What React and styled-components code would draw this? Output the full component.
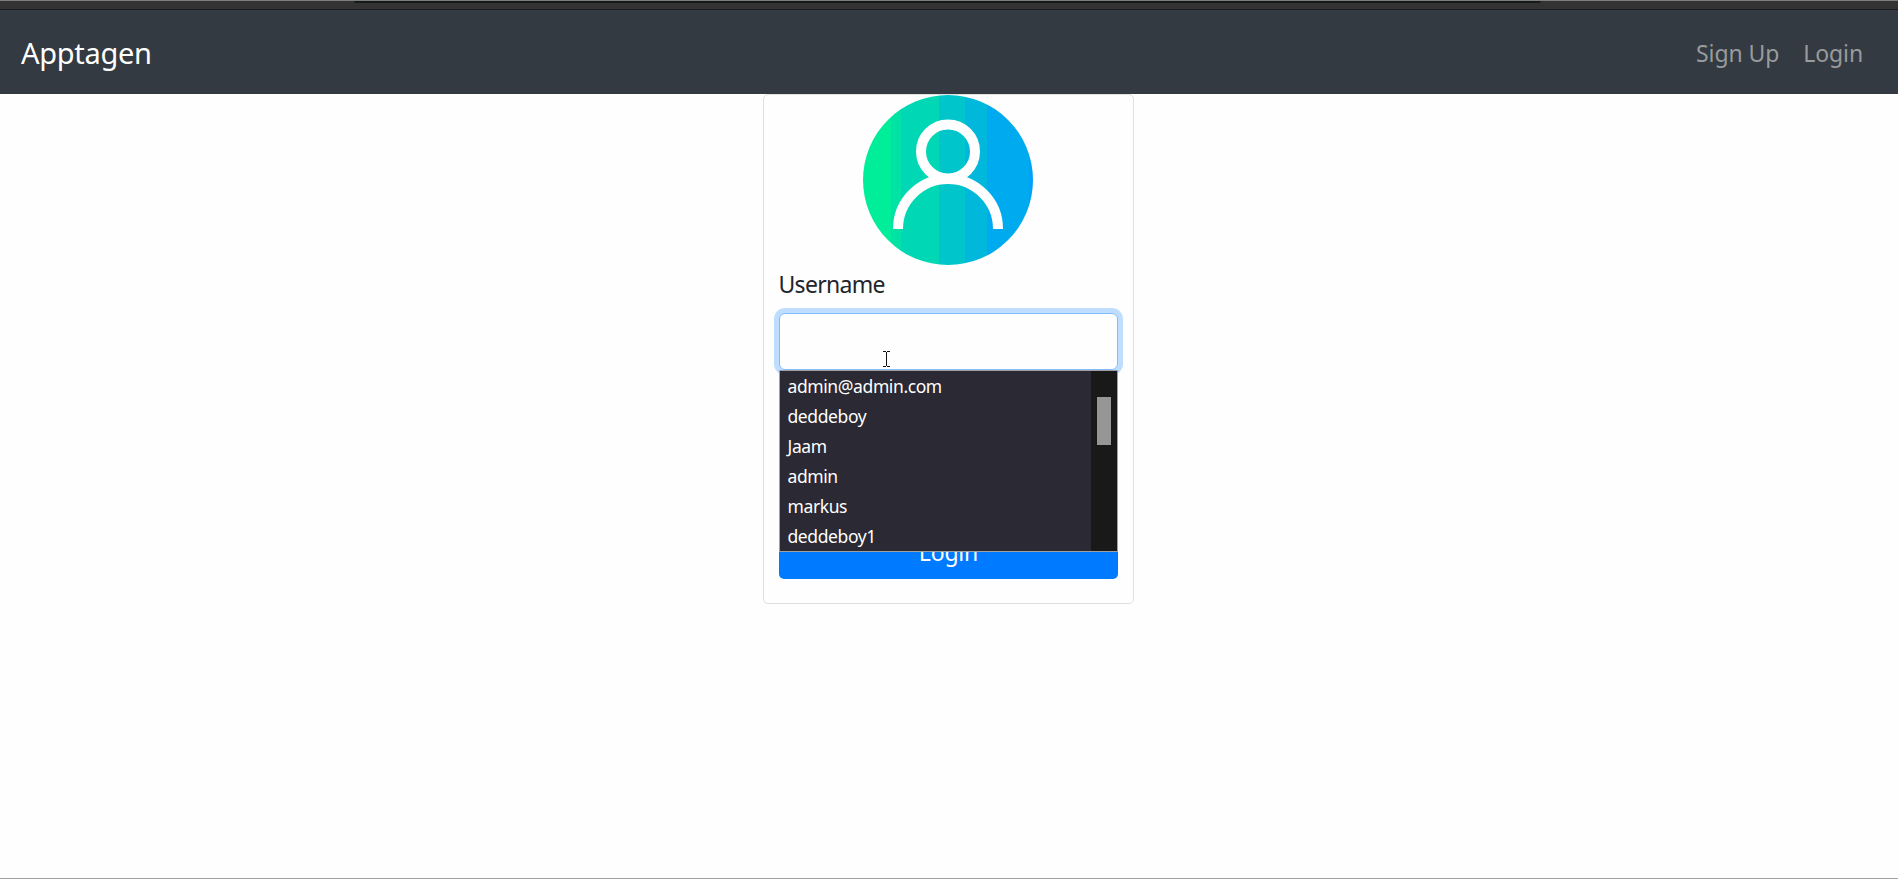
import React from "react";
import styled, { createGlobalStyle } from "styled-components";

const GlobalStyle = createGlobalStyle`
  *, *::before, *::after { box-sizing: border-box; }
  body {
    margin: 0;
    background: #fefefe;
    color: #212529;
    font-family: "Noto Sans", "Open Sans", sans-serif;
    font-size: 23px;
    line-height: 36px;
  }
`;

const Page = styled.div`
  height: 879px;
  display: flex;
  flex-direction: column;
  align-items: stretch;
  overflow: hidden;
  border-bottom: 1px solid #a0a0a0;
`;

const WindowStrip = styled.div`
  flex: none;
  height: 10px;
  background: #333333;
  border-top: 1px solid #7b7f7b;
  border-bottom: 1px solid #1a1c20;
`;

const WindowShade = styled.div`
  height: 2px;
  margin: 0 357px 0 354px;
  background: #171a18;
  border-radius: 0 0 2px 2px;
`;

const Navbar = styled.nav`
  flex: none;
  height: 84px;
  padding: 2px 35px 0 21px;
  display: flex;
  align-items: center;
  justify-content: space-between;
  background: #333a41;
`;

const Brand = styled.a`
  color: #ffffff;
  font-size: 29px;
  letter-spacing: -0.3px;
`;

const NavLinks = styled.div`
  display: flex;
  gap: 24px;
`;

const NavLink = styled.a`
  color: #999b9d;
  letter-spacing: -0.1px;
`;

const Card = styled.main`
  flex: none;
  width: 371px;
  height: 510px;
  margin: 0 auto;
  position: relative;
  left: -0.5px;
  padding: 0 15px;
  display: flex;
  flex-direction: column;
  border: 1px solid #dfdfdf;
  border-radius: 5px;
`;

const Avatar = styled.svg`
  display: block;
  width: 170px;
  height: 170px;
  margin: 0 85px 0 84px;
`;

const Label = styled.label`
  margin: 1px 0 11px -0.5px;
  letter-spacing: -0.7px;
`;

const Field = styled.div`
  position: relative;
  height: 57px;
  margin-bottom: 152px;
`;

const TextInput = styled.input`
  display: block;
  width: 100%;
  height: 57px;
  padding: 9px 18px;
  border: 1px solid #80bdff;
  border-radius: 6px;
  outline: none;
  background: #fefefe;
  box-shadow: 0 0 0 5px #bfdeff;
  font: inherit;
`;

const Suggestions = styled.div`
  position: absolute;
  top: 57px;
  left: 0;
  width: 339px;
  height: 182px;
  display: flex;
  border: 1px solid #a0a0a0;
  background: #2b2933;
`;

const SuggestionList = styled.ul`
  flex: 1;
  margin: 0;
  padding: 0 0 0 7.5px;
  list-style: none;
`;

const Suggestion = styled.li`
  height: 30px;
  line-height: 31px;
  color: #ffffff;
  font-size: 17.5px;
  letter-spacing: -0.4px;
`;

const ScrollTrack = styled.div`
  width: 26px;
  padding: 26px 6px 0;
  background: #191919;
`;

const ScrollThumb = styled.div`
  width: 14px;
  height: 48px;
  background: #969696;
`;

const Pointer = styled.svg`
  position: absolute;
  left: 104px;
  top: 38px;
  width: 7px;
  height: 16px;
`;

const SubmitButton = styled.button`
  height: 57px;
  padding: 2px 0 0;
  border: 0;
  border-radius: 5px;
  background: #007bff;
  color: #ffffff;
  font: inherit;
  letter-spacing: -0.2px;
`;

const stripes = [
  [0, 28, "#00ed9a"],
  [28, 10, "#00e3a5"],
  [38, 38, "#00d7b4"],
  [76, 26, "#00c6cb"],
  [102, 22, "#00b8dc"],
  [124, 42, "#00aaee"],
  [166, 4, "#00a0ff"],
];

const names = ["admin@admin.com", "deddeboy", "Jaam", "admin", "markus", "deddeboy1"];

export default function App() {
  return (
    <Page>
      <GlobalStyle />
      <WindowStrip>
        <WindowShade />
      </WindowStrip>
      <Navbar>
        <Brand>Apptagen</Brand>
        <NavLinks>
          <NavLink>Sign Up</NavLink>
          <NavLink>Login</NavLink>
        </NavLinks>
      </Navbar>
      <Card>
        <Avatar viewBox="0 0 170 170">
          <clipPath id="disc">
            <circle cx="85" cy="85" r="85" />
          </clipPath>
          <g clipPath="url(#disc)">
            {stripes.map(([x, w, fill]) => (
              <rect key={x} x={x} y="0" width={w} height="170" fill={fill} />
            ))}
          </g>
          <g fill="none" stroke="#fefefe" strokeWidth="10">
            <circle cx="85" cy="56.5" r="27" />
            <path d="M35 134A50 50 0 0 1 135 134" />
          </g>
        </Avatar>
        <Label htmlFor="username">Username</Label>
        <Field>
          <TextInput id="username" />
          <Suggestions>
            <SuggestionList>
              {names.map((name) => (
                <Suggestion key={name}>{name}</Suggestion>
              ))}
            </SuggestionList>
            <ScrollTrack>
              <ScrollThumb />
            </ScrollTrack>
          </Suggestions>
          <Pointer viewBox="0 0 7 16" fill="none" stroke="#111111">
            <path d="M0 .5H3M4 .5H7M3.5 1V15M0 15.5H3M4 15.5H7" shapeRendering="crispEdges" />
          </Pointer>
        </Field>
        <SubmitButton>Login</SubmitButton>
      </Card>
    </Page>
  );
}
